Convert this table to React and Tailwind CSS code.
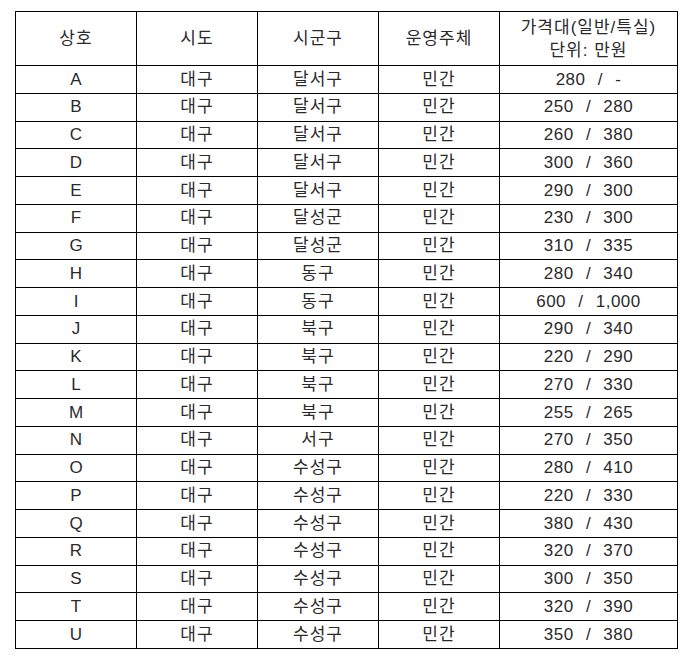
const rows = [
  ["A", "대구", "달서구", "민간", "280 / -"],
  ["B", "대구", "달서구", "민간", "250 / 280"],
  ["C", "대구", "달서구", "민간", "260 / 380"],
  ["D", "대구", "달서구", "민간", "300 / 360"],
  ["E", "대구", "달서구", "민간", "290 / 300"],
  ["F", "대구", "달성군", "민간", "230 / 300"],
  ["G", "대구", "달성군", "민간", "310 / 335"],
  ["H", "대구", "동구", "민간", "280 / 340"],
  ["I", "대구", "동구", "민간", "600 / 1,000"],
  ["J", "대구", "북구", "민간", "290 / 340"],
  ["K", "대구", "북구", "민간", "220 / 290"],
  ["L", "대구", "북구", "민간", "270 / 330"],
  ["M", "대구", "북구", "민간", "255 / 265"],
  ["N", "대구", "서구", "민간", "270 / 350"],
  ["O", "대구", "수성구", "민간", "280 / 410"],
  ["P", "대구", "수성구", "민간", "220 / 330"],
  ["Q", "대구", "수성구", "민간", "380 / 430"],
  ["R", "대구", "수성구", "민간", "320 / 370"],
  ["S", "대구", "수성구", "민간", "300 / 350"],
  ["T", "대구", "수성구", "민간", "320 / 390"],
  ["U", "대구", "수성구", "민간", "350 / 380"],
];

const cell = "border border-black text-center align-middle p-0";
const kor = "text-[17px] tracking-[1px]";

export default function App() {
  return (
    <div
      className="bg-white w-[691px] h-[661px] pt-[11px] pl-[15px] text-[#2a2a2a]"
      style={{ fontFamily: '"Liberation Sans", "Noto Sans CJK KR", sans-serif' }}
    >
      <table className="table-fixed border-collapse w-[662px]">
        <colgroup>
          <col className="w-[121px]" />
          <col className="w-[121px]" />
          <col className="w-[121px]" />
          <col className="w-[121px]" />
          <col className="w-[178px]" />
        </colgroup>
        <thead>
          <tr className={`h-[54px] ${kor}`}>
            <th className={`${cell} font-normal`}>상호</th>
            <th className={`${cell} font-normal`}>시도</th>
            <th className={`${cell} font-normal`}>시군구</th>
            <th className={`${cell} font-normal`}>운영주체</th>
            <th className={`${cell} font-normal leading-[23px]`}>
              가격대(일반/특실)
              <br />
              단위: 만원
            </th>
          </tr>
        </thead>
        <tbody>
          {rows.map((r) => (
            <tr key={r[0]} className="h-[27.76px]">
              <td className={`${cell} text-[17px]`}>{r[0]}</td>
              <td className={`${cell} ${kor}`}>{r[1]}</td>
              <td className={`${cell} ${kor}`}>{r[2]}</td>
              <td className={`${cell} ${kor}`}>{r[3]}</td>
              <td className={`${cell} text-[17px] tracking-[0.5px] [word-spacing:7px]`}>
                {r[4]}
              </td>
            </tr>
          ))}
        </tbody>
      </table>
    </div>
  );
}
